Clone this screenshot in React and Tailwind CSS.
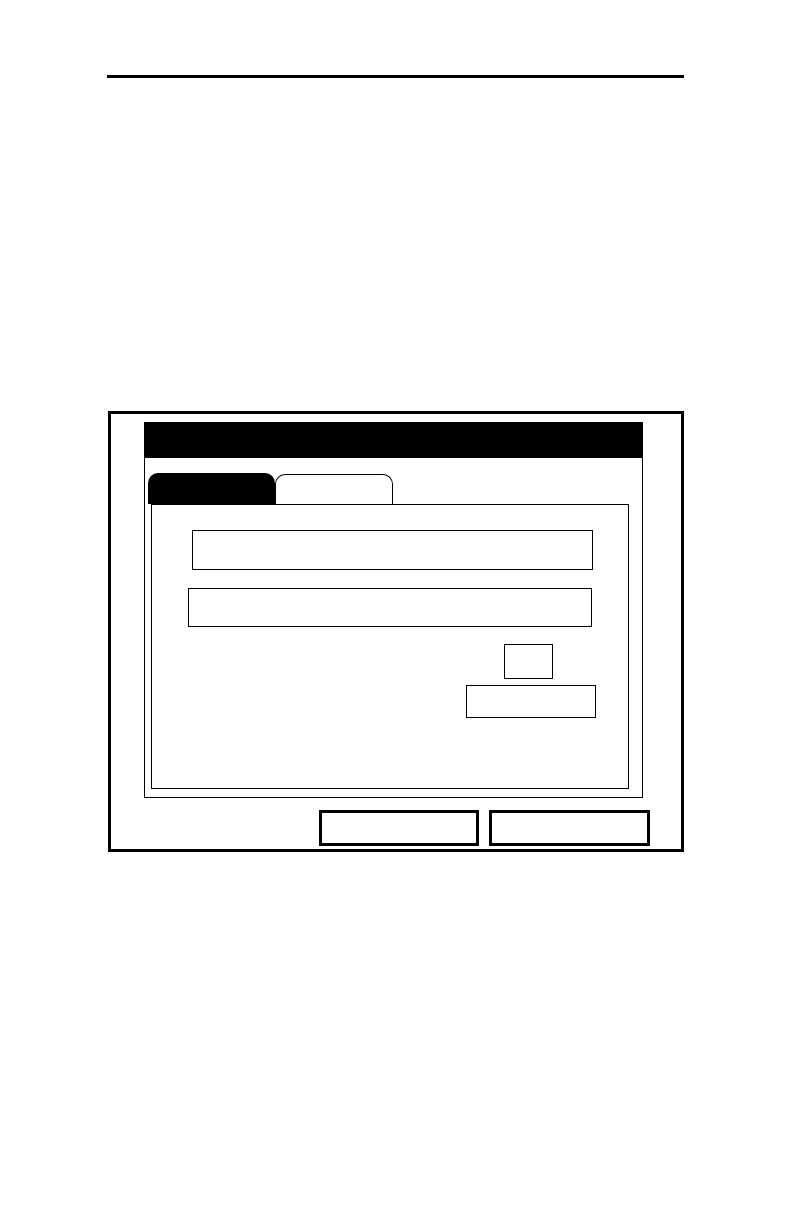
import React from "react";

function Field({ className }) {
  return <div className={`border border-black bg-white ${className}`} />;
}

export default function App() {
  return (
    <div className="w-[792px] h-[1224px] bg-white flex flex-col font-['Liberation_Sans',sans-serif]">
      {/* page header rule */}
      <div className="mt-[75px] ml-[107px] w-[577px] h-[3px] bg-black" />

      {/* screen frame */}
      <div className="mt-[333px] ml-[108px] w-[576px] h-[441px] border-[3px] border-black flex flex-col">
        <div className="ml-[33px] mt-[8px] w-[499px] h-[376px] border border-black flex flex-col">
          {/* title bar */}
          <div className="h-[35px] bg-black shrink-0" />

          {/* tabs */}
          <div className="mt-[15px] ml-[3px] flex items-end h-[31px] shrink-0">
            <div className="w-[127px] h-[31px] bg-black rounded-t-[10px]" />
            <div className="w-[118px] h-[30px] border border-b-0 border-black rounded-t-[10px] bg-white" />
          </div>

          {/* tab panel */}
          <div className="ml-[6px] w-[478px] h-[285px] border border-black flex flex-col">
            <Field className="ml-[40px] mt-[25px] w-[401px] h-[40px]" />
            <Field className="ml-[36px] mt-[18px] w-[404px] h-[39px]" />
            <Field className="ml-[352px] mt-[17px] w-[49px] h-[35px]" />
            <Field className="ml-[314px] mt-[6px] w-[130px] h-[33px]" />
          </div>
        </div>

        {/* soft keys */}
        <div className="mt-[12px] ml-[208px] flex gap-[10px]">
          <div className="w-[160px] h-[36px] border-[3px] border-black" />
          <div className="w-[161px] h-[36px] border-[3px] border-black" />
        </div>
      </div>
    </div>
  );
}
